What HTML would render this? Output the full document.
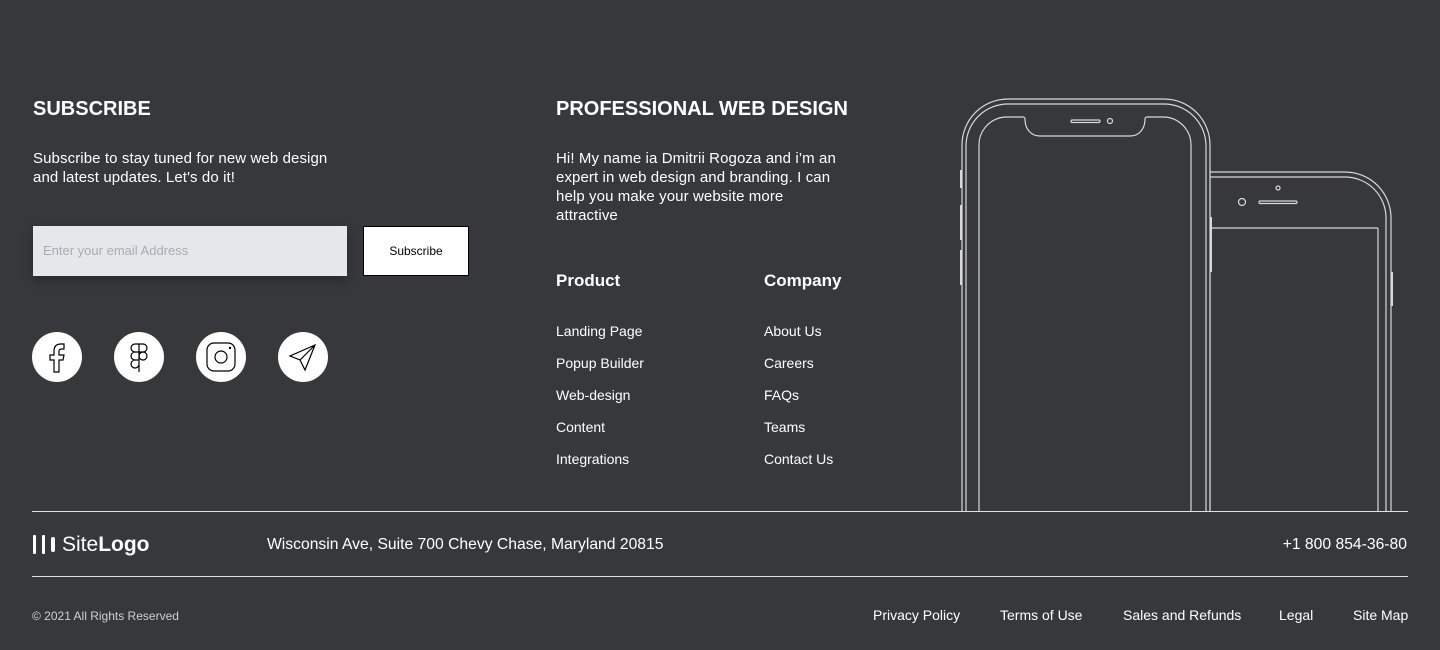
<!DOCTYPE html>
<html><head><meta charset="utf-8"><style>
*{margin:0;padding:0;box-sizing:border-box}
body{width:1440px;height:650px;background:#37383c;font-family:"Liberation Sans",sans-serif;color:#fff;position:relative;overflow:hidden}
.a{position:absolute;white-space:nowrap}
h2{position:absolute;font-size:20px;font-weight:bold;letter-spacing:0}
p.t{position:absolute;font-size:15px;line-height:19px;letter-spacing:.1px}
.l{position:absolute;font-size:14px}
.ic{position:absolute;top:332px;width:50px;height:50px;border-radius:50%;background:#fff}
.ic svg{width:50px;height:50px}
.ft{position:absolute;top:607px;font-size:14px}
</style></head><body>
<h2 style="left:33px;top:98px">SUBSCRIBE</h2>
<p class="t" style="left:33px;top:149px">Subscribe to stay tuned for new web design<br>and latest updates. Let's do it!</p>
<div class="a" style="left:33px;top:226px;width:314px;height:50px;background:#e6e7ea;box-shadow:0 4px 10px rgba(0,0,0,.3);color:#a9abb0;font-size:13px;line-height:50px;padding-left:10px">Enter your email Address</div>
<div class="a" style="left:363px;top:226px;width:106px;height:50px;background:#fff;border:1px solid #000;color:#000;font-size:12px;line-height:48px;text-align:center">Subscribe</div>
<div class="ic" style="left:32px"><svg viewBox="0 0 50 50" fill="none" stroke="#000" stroke-width="1.2"><path d="M22 40V28h-4v-5h4v-4c0-4 2-7 7-7h3v5h-3c-1 0-2 1-2 2v4h5l-1 5h-4v12z"/></svg></div>
<div class="ic" style="left:114px"><svg viewBox="0 0 50 50" fill="none" stroke="#000" stroke-width="1.2"><path d="M25 12h-4a4 4 0 0 0 0 8h4zM25 12h4a4 4 0 0 1 0 8h-4zM25 20h-4a4 4 0 0 0 0 8h4zM25 28h-4a4 4 0 1 0 4 4zM25 20v20"/><circle cx="29" cy="24" r="4"/></svg></div>
<div class="ic" style="left:196px"><svg viewBox="0 0 50 50" fill="none" stroke="#000" stroke-width="1.2"><rect x="11" y="11" width="28" height="28" rx="7"/><circle cx="25" cy="25" r="6"/><circle cx="34" cy="16" r=".6"/></svg></div>
<div class="ic" style="left:278px"><svg viewBox="0 0 50 50" fill="none" stroke="#000" stroke-width="1.2"><path d="M37 13L12 24l10 4 5 10zM37 13L22 28"/></svg></div>

<h2 style="left:556px;top:98px">PROFESSIONAL WEB DESIGN</h2>
<p class="t" style="left:556px;top:149px">Hi! My name ia Dmitrii Rogoza and i’m an<br>expert in web design and branding. I can<br>help you make your website more<br>attractive</p>
<div class="a" style="left:556px;top:271px;font-size:17px;font-weight:bold">Product</div>
<div class="a" style="left:764px;top:271px;font-size:17px;font-weight:bold">Company</div>
<div class="l" style="left:556px;top:315px;line-height:32px">Landing Page<br>Popup Builder<br>Web-design<br>Content<br>Integrations</div>
<div class="l" style="left:764px;top:315px;line-height:32px">About Us<br>Careers<br>FAQs<br>Teams<br>Contact Us</div>

<svg class="a" style="left:0;top:0" width="1440" height="511" fill="none" stroke="#d8d8d8" stroke-width="1.2">
<path d="M1210 511V172h135a46 46 0 0 1 46 46v293"/>
<path d="M1205 511V177h140a41 41 0 0 1 41 41v293"/>
<path d="M1210 228h167a1 1 0 0 1 1 1v282"/>
<circle cx="1242" cy="202" r="3.5"/><rect x="1259" y="201" width="38" height="2.5" rx="1.2"/><circle cx="1278" cy="188" r="2"/>
<path d="M962 511V145a46 46 0 0 1 46-46h156a46 46 0 0 1 46 46v366" fill="#37383c"/>
<path d="M966 511V146a42 42 0 0 1 42-42h156a42 42 0 0 1 42 42v365"/>
<path d="M979 511V145a28 28 0 0 1 28-28h16a2 2 0 0 1 2 2c0 10 6 17 15 17h90c9 0 15-7 15-17a2 2 0 0 1 2-2h16a28 28 0 0 1 28 28v366"/>
<rect x="1071" y="120" width="29" height="2.5" rx="1.2"/><circle cx="1110" cy="121" r="2.5"/>
<path d="M961 170v18M961 205v35M961 250v35M1211 217v55M1392 272v34" stroke-width="2"/>
</svg>

<div class="a" style="left:32px;top:511px;width:1376px;height:1px;background:#e0e0e0"></div>
<div class="a" style="left:32px;top:576px;width:1376px;height:1px;background:#e0e0e0"></div>
<div class="a" style="left:33px;top:535px;width:3px;height:19px;background:#fff;border-radius:1px"></div>
<div class="a" style="left:42px;top:535px;width:3px;height:19px;background:#fff;border-radius:1px"></div>
<div class="a" style="left:51px;top:537px;width:4px;height:15px;background:#fff;border-radius:2px"></div>
<div class="a" style="left:62px;top:533px;font-size:21px">Site<b>Logo</b></div>
<div class="a" style="left:267px;top:536px;font-size:15.7px">Wisconsin Ave, Suite 700 Chevy Chase, Maryland 20815</div>
<div class="a" style="right:33px;top:536px;font-size:15.7px">+1 800 854-36-80</div>
<div class="a" style="left:32px;top:609px;font-size:12px;color:#cfcfcf">© 2021 All Rights Reserved</div>
<div class="ft" style="left:873px">Privacy Policy</div>
<div class="ft" style="left:1000px">Terms of Use</div>
<div class="ft" style="left:1123px">Sales and Refunds</div>
<div class="ft" style="left:1279px">Legal</div>
<div class="ft" style="left:1353px">Site Map</div>
</body></html>
